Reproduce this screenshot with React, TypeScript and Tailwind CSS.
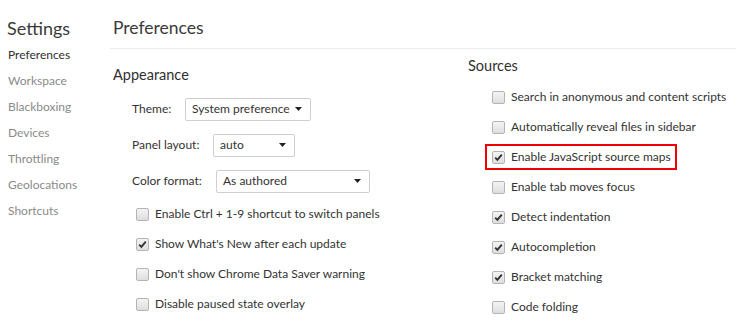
import React from 'react';

const sideItems = ['Preferences', 'Workspace', 'Blackboxing', 'Devices', 'Throttling', 'Geolocations', 'Shortcuts'];

const sources = [
  { label: 'Search in anonymous and content scripts', checked: false },
  { label: 'Automatically reveal files in sidebar', checked: false },
  { label: 'Enable JavaScript source maps', checked: true, boxed: true },
  { label: 'Enable tab moves focus', checked: false },
  { label: 'Detect indentation', checked: true },
  { label: 'Autocompletion', checked: true },
  { label: 'Bracket matching', checked: true },
  { label: 'Code folding', checked: false },
];

const appearanceChecks = [
  { label: 'Enable Ctrl + 1-9 shortcut to switch panels', checked: false },
  { label: "Show What's New after each update", checked: true },
  { label: "Don't show Chrome Data Saver warning", checked: false },
  { label: 'Disable paused state overlay', checked: false },
];

function Box({ checked }: { checked?: boolean }) {
  return (
    <span className="flex h-[13px] w-[13px] shrink-0 items-center justify-center rounded-[2px] border border-[#b4b4b4] bg-linear-to-b from-[#f4f4f4] to-[#dedede]">
      {checked && (
        <svg width="9" height="9" viewBox="0 0 9 9">
          <path d="M1.2 4.6 L3.4 6.8 L7.8 1.6" fill="none" stroke="#333" strokeWidth="1.9" />
        </svg>
      )}
    </span>
  );
}

function CheckRow({ label, checked, boxed }: { label: string; checked?: boolean; boxed?: boolean }) {
  if (boxed) {
    return (
      <div className="flex h-[30px] items-center">
        <div className="-ml-[7px] flex h-[26px] w-[192px] items-center gap-[6px] border-2 border-[#f00000] pl-[5px]">
          <Box checked={checked} />
          <span>{label}</span>
        </div>
      </div>
    );
  }
  return (
    <div className="flex h-[30px] items-center gap-[6px]">
      <Box checked={checked} />
      <span>{label}</span>
    </div>
  );
}

function Select({ value, width, labelWidth, label }: { value: string; width: string; labelWidth: string; label: string }) {
  return (
    <div className="flex h-[36px] items-center">
      <span className={labelWidth}>{label}</span>
      <div className={`flex h-[23px] items-center justify-between rounded-[2px] border border-[#cfcfcf] bg-white pl-[6px] pr-[8px] ${width}`}>
        <span>{value}</span>
        <svg width="7" height="4" viewBox="0 0 7 4">
          <path d="M0 0 H7 L3.5 4 Z" fill="#222" />
        </svg>
      </div>
    </div>
  );
}

export default function App() {
  return (
    <div
      className="flex h-[323px] w-[736px] overflow-hidden bg-white text-[12px] text-[#333]"
      style={{ fontFamily: 'Lato, "Open Sans", sans-serif' }}
    >
      <aside className="w-[110px] shrink-0 pl-[7px]">
        <h1 className="mt-[15px] h-[28px] text-[18px] leading-[26px] text-[#3a3a3a]">Settings</h1>
        <ul className="mt-[-1px]">
          {sideItems.map((s, i) => (
            <li key={s} className={`flex h-[26px] items-center pl-px text-[12px] ${i === 0 ? 'text-[#303030]' : 'text-[#8a8a8a]'}`}>
              {s}
            </li>
          ))}
        </ul>
      </aside>

      <main className="flex-1">
        <div className="h-[49px] border-b border-[#ebebeb] pl-[3px] pt-[15px]">
          <h2 className="text-[17.5px] leading-[26px] text-[#3a3a3a]">Preferences</h2>
        </div>

        <div className="flex">
          <section className="w-[358px] shrink-0 pl-[3px]">
            <h3 className="mt-[16px] h-[20px] text-[14.5px] leading-[20px] text-[#303030]">Appearance</h3>
            <div className="mt-[6px] pl-[19px]">
              <Select label="Theme:" labelWidth="w-[53px]" value="System preference" width="w-[126px]" />
              <Select label="Panel layout:" labelWidth="w-[81px]" value="auto" width="w-[82px]" />
              <Select label="Color format:" labelWidth="w-[84px]" value="As authored" width="w-[154px]" />
            </div>
            <div className="pl-[23px]">
              {appearanceChecks.map((c) => (
                <CheckRow key={c.label} label={c.label} checked={c.checked} />
              ))}
            </div>
          </section>

          <section className="flex-1">
            <h3 className="mt-[7px] h-[20px] text-[14.5px] leading-[20px] text-[#303030]">Sources</h3>
            <div className="mt-[6px] pl-[24px] whitespace-nowrap">
              {sources.map((s) => (
                <CheckRow key={s.label} label={s.label} checked={s.checked} boxed={s.boxed} />
              ))}
            </div>
          </section>
        </div>
      </main>
    </div>
  );
}
